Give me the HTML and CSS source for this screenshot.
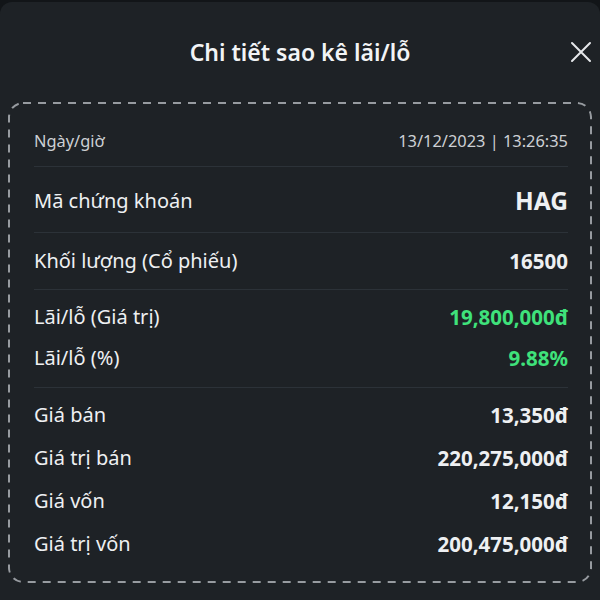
FILE: index.html
```html
<!DOCTYPE html>
<html lang="vi">
<head>
  <meta charset="UTF-8" />
  <meta name="viewport" content="width=device-width, initial-scale=1" />
  <title>Chi tiết sao kê lãi/lỗ</title>
  <link rel="stylesheet" href="styles.css">
</head>
<body>
  <div class="sheet">
    <header class="sheet-header">
      <span></span>
      <h1>Chi tiết sao kê lãi/lỗ</h1>
      <button class="close" aria-label="Đóng">
        <svg width="22" height="22" viewBox="0 0 22 22" fill="none" stroke="currentColor" stroke-width="2" stroke-linecap="round">
          <path d="M2 2 L20 20 M20 2 L2 20" />
        </svg>
      </button>
    </header>

    <section class="card">
      <div class="row row-date">
        <span>Ngày/giờ</span>
        <span>13/12/2023 | 13:26:35</span>
      </div>
      <div class="row row-code">
        <span>Mã chứng khoán</span>
        <strong>HAG</strong>
      </div>
      <div class="row row-single">
        <span>Khối lượng (Cổ phiếu)</span>
        <strong>16500</strong>
      </div>
      <div class="group group-pl">
        <div class="row">
          <span>Lãi/lỗ (Giá trị)</span>
          <strong class="up">19,800,000đ</strong>
        </div>
        <div class="row">
          <span>Lãi/lỗ (%)</span>
          <strong class="up">9.88%</strong>
        </div>
      </div>
      <div class="group group-price">
        <div class="row">
          <span>Giá bán</span>
          <strong>13,350đ</strong>
        </div>
        <div class="row">
          <span>Giá trị bán</span>
          <strong>220,275,000đ</strong>
        </div>
        <div class="row">
          <span>Giá vốn</span>
          <strong>12,150đ</strong>
        </div>
        <div class="row">
          <span>Giá trị vốn</span>
          <strong>200,475,000đ</strong>
        </div>
      </div>
    </section>
  </div>
</body>
</html>
```

FILE: styles.css
```css
:root {
  --bg-back: #121518;
  --bg-sheet: #1e2226;
  --text: #eef0f2;
  --muted: #cdd0d4;
  --line: #2c3238;
  --green: #3fe27b;
}
* {
  box-sizing: border-box;
}
body {
  margin: 0;
  background: var(--bg-back);
  font-family: 'Noto Sans', 'Liberation Sans', sans-serif;
  color: var(--text);
}
.sheet {
  margin-top: 2px;
  min-height: 598px;
  background: var(--bg-sheet);
  border-radius: 12px 12px 0 0;
  padding: 0 8px 16px;
}
.sheet-header {
  height: 100px;
  display: grid;
  grid-template-columns: 1fr auto 1fr;
  align-items: center;
}
.sheet-header h1 {
  margin: 0;
  font-size: 23px;
  font-weight: 600;
  color: #f2f4f6;
}
.close {
  justify-self: end;
  background: none;
  border: none;
  padding: 0;
  color: #e6e8eb;
  display: flex;
}
/* dashed frame drawn as svg so the dashes can be longer than the browser's */
.card {
  padding: 0 24px 0 26px;
  border-radius: 14px;
  background-image: url("data:image/svg+xml,%3Csvg xmlns='http://www.w3.org/2000/svg' width='100%25' height='100%25'%3E%3Crect x='1' y='1' rx='14' ry='14' style='width:calc(100%25 - 2px);height:calc(100%25 - 2px)' fill='none' stroke='%23979ba0' stroke-width='2' stroke-dasharray='8 7'/%3E%3C/svg%3E");
}
.row {
  display: flex;
  justify-content: space-between;
  align-items: center;
  font-size: 20px;
  line-height: 26px;
}
.row strong {
  font-weight: 700;
  font-size: 20.5px;
}
.row-date {
  font-size: 16.4px;
  line-height: 21px;
  color: var(--muted);
  padding: 28px 0 15px;
  border-bottom: 1px solid var(--line);
}
.row-code {
  line-height: 28px;
  padding: 20px 0 17px;
  border-bottom: 1px solid var(--line);
}
.row-code strong {
  font-size: 24.5px;
}
.row-single {
  padding: 15px 0;
  border-bottom: 1px solid var(--line);
}
.group {
  display: flex;
  flex-direction: column;
  padding-top: 14px;
}
.group-pl {
  gap: 15px;
  padding-bottom: 16px;
  border-bottom: 1px solid var(--line);
}
.group-price {
  gap: 17px;
  padding-bottom: 26px;
}
.up {
  color: var(--green);
}
```
